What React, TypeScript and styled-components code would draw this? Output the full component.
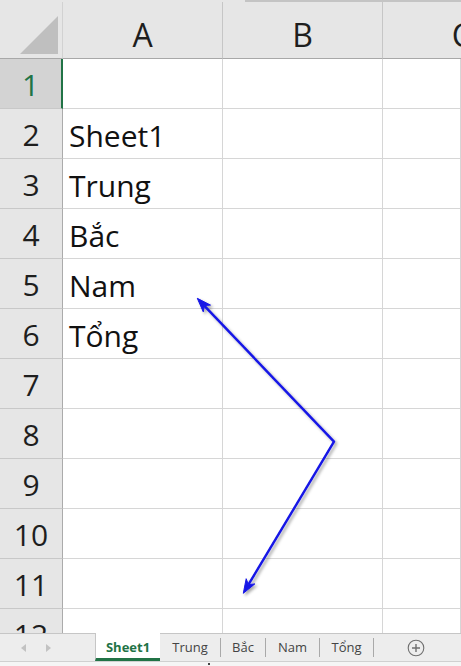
import styled, { createGlobalStyle } from "styled-components";

const GlobalStyle = createGlobalStyle`
  html, body {
    margin: 0;
    padding: 0;
    background: #ffffff;
    overflow: hidden;
  }
  * {
    box-sizing: border-box;
  }
`;

const HEADER_BG = "#e6e6e6";
const GREEN = "#217346";

const Page = styled.div`
  position: relative;
  width: 461px;
  height: 666px;
  display: flex;
  flex-direction: column;
  overflow: hidden;
  background: #ffffff;
  font-family: "Open Sans", "Noto Sans", sans-serif;
`;

const TopStrip = styled.div`
  height: 2px;
  display: flex;
  background: ${HEADER_BG};
`;
const TopEdge = styled.div`
  margin-left: auto;
  width: 216px;
  background: #c4c4c4;
`;

const Sheet = styled.div`
  flex: 1;
  min-height: 0;
  overflow: hidden;
  display: grid;
  grid-template-columns: 63px 160px 160px 1fr;
  grid-template-rows: 57px;
  grid-auto-rows: 50px;
`;

const Corner = styled.div`
  background: ${HEADER_BG};
  border-bottom: 1px solid #a8a8a8;
  border-right: 1px solid #d2d2d2;
  display: flex;
  align-items: flex-end;
  justify-content: flex-end;
  padding: 0 3px 3px 0;
`;

const ColHeader = styled.div`
  background: ${HEADER_BG};
  border-bottom: 1px solid #a8a8a8;
  border-right: 1px solid #c6c6c6;
  display: flex;
  align-items: center;
  justify-content: center;
  padding-top: 8px;
  font-size: 32px;
  color: #1e1e1e;
  overflow: hidden;
  white-space: nowrap;
`;

const RowHeader = styled.div<{ $selected?: boolean }>`
  background: ${({ $selected }) => ($selected ? "#d3d3d3" : HEADER_BG)};
  border-bottom: 1px solid #c8c8c8;
  border-right: ${({ $selected }) =>
    $selected ? `2px solid ${GREEN}` : "1px solid #ababab"};
  color: ${({ $selected }) => ($selected ? GREEN : "#1e1e1e")};
  display: flex;
  align-items: center;
  justify-content: center;
  padding-top: 2px;
  font-size: 30px;
`;

const Cell = styled.div`
  border-right: 1px solid #d6d6d6;
  border-bottom: 1px solid #d6d6d6;
  display: flex;
  align-items: center;
  padding: 3px 0 0 6px;
  font-size: 30px;
  color: #111111;
  white-space: nowrap;
  overflow: hidden;
`;

const Overlay = styled.svg`
  position: absolute;
  left: 0;
  top: 0;
  pointer-events: none;
`;

const TabBar = styled.div`
  height: 28px;
  flex-shrink: 0;
  display: flex;
  align-items: stretch;
  background: #ededed;
  border-top: 1px solid #c6c6c6;
  font-size: 13px;
`;

const Nav = styled.div`
  width: 95px;
  display: flex;
  align-items: center;
  gap: 20px;
  padding-left: 21px;
`;

const NavArrow = styled.span<{ $dir: "left" | "right" }>`
  width: 0;
  height: 0;
  border-top: 4px solid transparent;
  border-bottom: 4px solid transparent;
  ${({ $dir }) =>
    $dir === "left"
      ? "border-right: 5px solid #c2c2c2;"
      : "border-left: 5px solid #c2c2c2;"}
`;

const Tab = styled.div<{ $active?: boolean; $width: number }>`
  width: ${({ $width }) => $width}px;
  display: flex;
  align-items: center;
  justify-content: center;
  color: ${({ $active }) => ($active ? GREEN : "#444444")};
  font-weight: ${({ $active }) => ($active ? 700 : 400)};
  background: ${({ $active }) => ($active ? "#ffffff" : "transparent")};
  border-left: ${({ $active }) => ($active ? "1px solid #c6c6c6" : "none")};
  border-bottom: 3px solid
    ${({ $active }) => ($active ? GREEN : "transparent")};
  margin-top: ${({ $active }) => ($active ? "-1px" : "0")};
  padding-top: 2px;
`;

const Separator = styled.span`
  align-self: center;
  width: 1px;
  height: 19px;
  background: #a9a9a9;
`;

const AddTab = styled.div`
  flex: 1;
  display: flex;
  align-items: center;
  justify-content: center;
  padding-right: 4px;
`;

const BottomStrip = styled.div`
  height: 5px;
  flex-shrink: 0;
  background: #f5f5f5;
  border-top: 1px solid #d0d0d0;
  display: flex;
  align-items: flex-end;
  padding: 0 0 1px 208px;
`;

const Dot = styled.span`
  width: 2px;
  height: 2px;
  background: #444444;
`;

const rows: string[] = [
  "",
  "Sheet1",
  "Trung",
  "Bắc",
  "Nam",
  "Tổng",
  "",
  "",
  "",
  "",
  "",
  "",
];

const tabs = [
  { name: "Sheet1", width: 65, active: true },
  { name: "Trung", width: 60 },
  { name: "Bắc", width: 44 },
  { name: "Nam", width: 53 },
  { name: "Tổng", width: 53 },
];

export default function App() {
  return (
    <Page>
      <GlobalStyle />
      <TopStrip>
        <TopEdge />
      </TopStrip>
      <Sheet>
        <Corner>
          <svg width="40" height="40" viewBox="0 0 40 40">
            <polygon points="1,39 39,39 39,1" fill="#bfbfbf" />
          </svg>
        </Corner>
        <ColHeader>A</ColHeader>
        <ColHeader>B</ColHeader>
        <ColHeader style={{ justifyContent: "flex-end", marginRight: -12 }}>
          C
        </ColHeader>
        {rows.map((text, i) => (
          <Row key={i} index={i + 1} text={text} />
        ))}
      </Sheet>
      <TabBar>
        <Nav>
          <NavArrow $dir="left" />
          <NavArrow $dir="right" />
        </Nav>
        {tabs.map((t) => (
          <TabItem key={t.name} {...t} />
        ))}
        <AddTab>
          <svg width="18" height="18" viewBox="0 0 18 18">
            <circle cx="9" cy="9" r="7.8" fill="none" stroke="#6f6f6f" strokeWidth="1.1" />
            <path d="M9 5v8M5 9h8" stroke="#6f6f6f" strokeWidth="1.4" />
          </svg>
        </AddTab>
      </TabBar>
      <BottomStrip>
        <Dot />
      </BottomStrip>
      <Overlay width="461" height="666" viewBox="0 0 461 666">
        <defs>
          <filter id="arrowShadow" x="-20%" y="-20%" width="140%" height="140%">
            <feDropShadow dx="2" dy="2" stdDeviation="1.6" floodColor="#000" floodOpacity="0.35" />
          </filter>
        </defs>
        <g filter="url(#arrowShadow)" fill="#1414e6" stroke="#1414e6">
          <polyline
            points="204.2,305.6 334,441.7 248.4,584.7"
            fill="none"
            strokeWidth="2.4"
            strokeLinejoin="round"
          />
          <polygon
            points="197.3,298.3 210.5,305.1 204.2,305.6 203.3,311.9"
            strokeWidth="1"
            strokeLinejoin="round"
          />
          <polygon
            points="243.3,593.3 246.2,578.7 248.4,584.7 254.8,583.9"
            strokeWidth="1"
            strokeLinejoin="round"
          />
        </g>
      </Overlay>
    </Page>
  );
}

function Row({ index, text }: { index: number; text: string }) {
  return (
    <>
      <RowHeader $selected={index === 1}>{index}</RowHeader>
      <Cell>{text}</Cell>
      <Cell />
      <Cell />
    </>
  );
}

function TabItem({
  name,
  width,
  active,
}: {
  name: string;
  width: number;
  active?: boolean;
}) {
  return (
    <>
      <Tab $active={active} $width={width}>
        {name}
      </Tab>
      {!active && <Separator />}
    </>
  );
}
